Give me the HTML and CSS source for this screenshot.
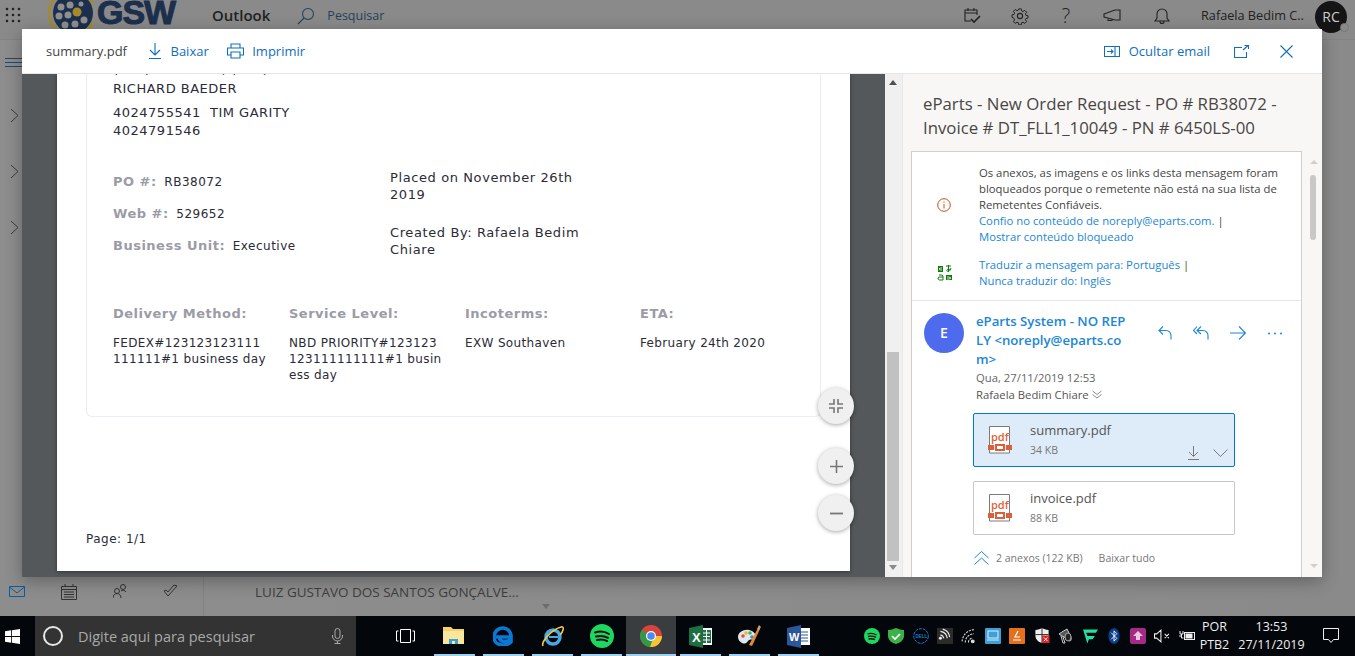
FILE: index.html
```html
<!DOCTYPE html>
<html lang="pt-BR">
<head>
  <meta charset="UTF-8">
  <title>Outlook</title>
  <link rel="stylesheet" href="styles.css">
</head>
<body>
  <div class="app">
    <!-- dimmed outlook behind the viewer -->
    <header class="topbar">
      <svg class="waffle" width="16" height="16" viewBox="0 0 16 16" fill="#222"><circle cx="2" cy="2" r="1.3"/><circle cx="8" cy="2" r="1.3"/><circle cx="14" cy="2" r="1.3"/><circle cx="2" cy="8" r="1.3"/><circle cx="8" cy="8" r="1.3"/><circle cx="14" cy="8" r="1.3"/><circle cx="2" cy="14" r="1.3"/><circle cx="8" cy="14" r="1.3"/><circle cx="14" cy="14" r="1.3"/></svg>
      <div class="logo">
        <svg width="46" height="29" viewBox="0 0 46 29"><circle cx="25" cy="13" r="23" fill="none" stroke="#a58a2c" stroke-width="2.500"/><circle cx="26" cy="13" r="20" fill="#1c2f4c"/><g fill="#8f8f8f"><circle cx="14" cy="7" r="3.500"/><circle cx="23" cy="5" r="3.500"/><circle cx="12" cy="16" r="3.500"/><circle cx="21" cy="15" r="3.500"/><circle cx="37" cy="20" r="3.500"/><circle cx="28" cy="24" r="3.500"/><circle cx="18" cy="25" r="3.500"/><circle cx="34" cy="4" r="2.500"/></g><circle cx="30" cy="12" r="4.500" fill="#a58a2c"/></svg>
        <span class="logo-name">GSW</span>
      </div>
      <span class="app-name">Outlook</span>
      <svg class="search-icon" width="18" height="18" viewBox="0 0 18 18" fill="none" stroke="#24425c" stroke-width="1.1"><circle cx="11" cy="7" r="5.5"/><path d="M7 11l-6 6"/></svg>
      <span class="search-label">Pesquisar</span>
      <div class="top-actions">
        <svg width="18" height="18" viewBox="0 0 18 18" fill="none" stroke="#222" stroke-width="1.1"><path d="M8 14H2V3h12v5M2 6h12M5 1v3M11 1v3"/><path d="M8 12l3 3 6-6" stroke-width="1.6"/></svg>
        <svg class="gear" width="18" height="18" viewBox="0 0 18 18" fill="none" stroke="#222" stroke-width="1.1"><circle cx="9" cy="9" r="2.6"/><path d="M7.6 1h2.8l.4 2.3 1.6.7 2-1.3 2 2-1.3 2 .7 1.6 2.2.4v2.600l-2.200.4-.7 1.600 1.300 2-2 2-2-1.300-1.600.7-.4 2.200H7.600l-.4-2.200-1.600-.7-2 1.300-2-2 1.300-2-.7-1.600L0 10.300V7.700l2.200-.4.7-1.600-1.300-2 2-2 2 1.300 1.600-.7z" transform="translate(1 1) scale(.89)"/></svg>
        <span class="help">?</span>
        <svg width="18" height="16" viewBox="0 0 18 16" fill="none" stroke="#222" stroke-width="1.1"><path d="M1 6l11-4h5v10h-5L1 9zM5 10v2.500h4V11"/></svg>
        <svg width="16" height="18" viewBox="0 0 16 18" fill="none" stroke="#222" stroke-width="1.1"><path d="M1 14h14l-2-3V7a5 5 0 0 0-10 0v4zM6 14.500a2 2 0 0 0 4 0"/></svg>
      </div>
      <span class="user-name">Rafaela Bedim C..</span>
      <div class="user-avatar">RC<span class="presence"></span></div>
    </header>

    <div class="behind">
      <nav class="rail">
        <svg class="burger" width="17" height="9" viewBox="0 0 17 9" stroke="#1e4a70"><path d="M0 .5h17M0 4.500h17M0 8.500h17"/></svg>
        <svg class="rail-chev" width="9" height="15" viewBox="0 0 9 15" fill="none" stroke="#3c3c3c"><path d="M1 1l7 6.500-7 6.500"/></svg>
        <svg class="rail-chev" width="9" height="15" viewBox="0 0 9 15" fill="none" stroke="#3c3c3c"><path d="M1 1l7 6.500-7 6.500"/></svg>
        <svg class="rail-chev" width="9" height="15" viewBox="0 0 9 15" fill="none" stroke="#3c3c3c"><path d="M1 1l7 6.500-7 6.500"/></svg>
      </nav>
      <div class="bottom-nav">
        <div class="nav-icons">
          <svg width="16" height="12" viewBox="0 0 16 12" fill="none" stroke="#0f5c9c"><path d="M.5.500h15v10H.5zM.5 1l7.500 6 7.500-6"/></svg>
          <svg width="16" height="16" viewBox="0 0 16 16" fill="none" stroke="#333"><path d="M.5 2.500h15v13H.5zM.5 5.500h15M3 8h10M3 10.500h10M3 13h10M4 0v2M12 0v2"/></svg>
          <svg width="14" height="15" viewBox="0 0 14 15" fill="none" stroke="#333"><circle cx="10" cy="3" r="2.500"/><circle cx="4" cy="7" r="2.500"/><path d="M0 14c0-6 8-6 8 0M8 7c1-1 4-1 5 1"/></svg>
          <svg width="15" height="13" viewBox="0 0 15 13" fill="none" stroke="#333"><path d="M1 7l4 5 9-10-3-1-6 7-2-2z"/></svg>
        </div>
        <div class="mail-peek">
          <span class="peek-name">LUIZ GUSTAVO DOS SANTOS GONÇALVE...</span>
          <span class="peek-arrow"></span>
        </div>
      </div>
    </div>

    <!-- attachment viewer -->
    <section class="viewer">
      <div class="viewer-head">
        <span class="file-title">summary.pdf</span>
        <button class="tool">
          <svg width="14" height="18" viewBox="0 0 14 18" fill="none" stroke="#106ebe" stroke-width="1.1"><path d="M7 1v12M2 8l5 5 5-5M1 16.500h12"/></svg>
          Baixar
        </button>
        <button class="tool">
          <svg width="17" height="16" viewBox="0 0 17 16" fill="none" stroke="#106ebe" stroke-width="1.1"><path d="M4 5V1h9v4M4 12H.5V5h16v7H13M4 9h9v6H4z"/></svg>
          Imprimir
        </button>
        <div class="head-right">
          <button class="tool">
            <svg width="16" height="11" viewBox="0 0 16 11" fill="none" stroke="#106ebe" stroke-width="1.1"><path d="M.5.500h15v10H.5zM11 .5v10M3 5.500h6M7 3.500l2 2-2 2"/></svg>
            Ocultar email
          </button>
          <svg width="15" height="13" viewBox="0 0 15 13" fill="none" stroke="#106ebe" stroke-width="1.1"><path d="M8 2.500H.5v10h12V7M9 5l5-4.500M10.500.5H14.500V4"/></svg>
          <svg class="close" width="13" height="13" viewBox="0 0 13 13" stroke="#106ebe" stroke-width="1.1"><path d="M.5.500l12 12M12.500.5l-12 12"/></svg>
        </div>
      </div>

      <div class="viewer-body">
        <div class="pdf-pane">
          <div class="pdf-page">
            <div class="pdf-card">
              <p class="clipped">(402) 475-5541, (402) 479</p>
              <p class="pdf-line">RICHARD BAEDER</p>
              <p class="pdf-line contact">4024755541&nbsp; TIM GARITY<br>4024791546</p>

              <div class="order-grid">
                <div class="order-ids">
                  <p><b>PO #:</b> <span>RB38072</span></p>
                  <p><b>Web #:</b> <span>529652</span></p>
                  <p><b>Business Unit:</b> <span>Executive</span></p>
                </div>
                <div class="order-meta">
                  <p>Placed on November 26th 2019</p>
                  <p>Created By: Rafaela Bedim Chiare</p>
                </div>
              </div>

              <div class="ship-grid">
                <div><b>Delivery Method:</b><p>FEDEX#123123123111<br>111111#1 business day</p></div>
                <div><b>Service Level:</b><p>NBD PRIORITY#123123<br>123111111111#1 busin<br>ess day</p></div>
                <div><b>Incoterms:</b><p>EXW Southaven</p></div>
                <div><b>ETA:</b><p>February 24th 2020</p></div>
              </div>
            </div>
            <p class="page-no">Page: 1/1</p>
            <div class="zoom-tools">
              <button class="zoom-btn shrink">
                <svg width="14" height="14" viewBox="0 0 14 14" fill="none" stroke="#777" stroke-width="1.6"><path d="M5 0v5H0M9 0v5h5M5 14V9H0M9 14V9h5"/></svg>
              </button>
              <button class="zoom-btn">
                <svg width="13" height="13" viewBox="0 0 13 13" stroke="#777" stroke-width="1.6"><path d="M6.500 0v13M0 6.500h13"/></svg>
              </button>
              <button class="zoom-btn">
                <svg width="13" height="13" viewBox="0 0 13 13" stroke="#777" stroke-width="1.8"><path d="M0 6.500h13"/></svg>
              </button>
            </div>
          </div>
        </div>
        <div class="pdf-scroll">
          <span class="pdf-up"></span>
          <span class="pdf-thumb"></span>
          <span class="pdf-down"></span>
        </div>

        <aside class="mail-pane">
          <h2 class="subject">eParts - New Order Request - PO # RB38072 - Invoice # DT_FLL1_10049 - PN # 6450LS-00</h2>
          <div class="mail-wrap">
            <div class="mail-card">
              <div class="notice">
                <svg width="14" height="14" viewBox="0 0 14 14" fill="none" stroke="#ca5010"><circle cx="7" cy="7" r="6.300"/><path d="M7 6v4.500M7 3.500v1.200"/></svg>
                <p>Os anexos, as imagens e os links desta mensagem foram bloqueados porque o remetente não está na sua lista de Remetentes Confiáveis.<br><a>Confio no conteúdo de noreply@eparts.com.</a> |<br><a>Mostrar conteúdo bloqueado</a></p>
              </div>
              <div class="notice translate">
                <svg width="16" height="16" viewBox="0 0 16 16" fill="#107c10"><path d="M1 1h5v6H1zM9 10h6v5H9z"/><path d="M5 3H3L2 4l1 1h2M10 12h2l2 1-2 1h-2" stroke="#fff" stroke-width=".8" fill="none"/><path d="M9 1h5M11.500 0v7M14 3c-1 3-3 4-4 3s1-3 4-1" fill="none" stroke="#107c10"/><path d="M2 10h3l1 1v4H2.500L1 14v-1l1-1h4" fill="none" stroke="#107c10"/></svg>
                <p><a>Traduzir a mensagem para: Português</a> |<br><a>Nunca traduzir do: Inglês</a></p>
              </div>
              <div class="mail-from">
                <div class="from-avatar">E</div>
                <div class="from-info">
                  <a class="from-name">eParts System - NO REP<br>LY &lt;noreply@eparts.co<br>m&gt;</a>
                  <p class="from-date">Qua, 27/11/2019 12:53</p>
                  <p class="from-to">Rafaela Bedim Chiare <svg width="10" height="9" viewBox="0 0 10 9" fill="none" stroke="#8a8a8a"><path d="M.5 1L5 4.500 9.500 1M.5 4.500L5 8l4.500-3.500"/></svg></p>
                </div>
                <div class="from-actions">
                  <svg width="14" height="14" viewBox="0 0 14 14" fill="none" stroke="#1a86d8" stroke-width="1.1"><path d="M5 .5L1 4.500l4 4M1 4.500h7a5 5 0 0 1 5 5v4"/></svg>
                  <svg width="16" height="14" viewBox="0 0 16 14" fill="none" stroke="#1a86d8" stroke-width="1.1"><path d="M4 .5L.5 4.500 4 8M8 .5L4 4.500 8 8M4 4.500h6a5 5 0 0 1 5 5v4"/></svg>
                  <svg width="16" height="14" viewBox="0 0 16 14" fill="none" stroke="#1a86d8" stroke-width="1.1"><path d="M0 7h15M9 .5L15.500 7 9 13.500"/></svg>
                  <svg width="16" height="3" viewBox="0 0 16 3" fill="#1a86d8"><circle cx="2" cy="1.500" r="1"/><circle cx="8" cy="1.500" r="1"/><circle cx="14" cy="1.500" r="1"/></svg>
                </div>
              </div>
              <div class="attachments">
                <div class="attach selected">
                  <svg class="pdf-icon" width="24" height="28" viewBox="0 0 24 28"><path d="M1.500 19V.5h20V19M1.500 24v3h20v-3" fill="#fff" stroke="#7a7a7a"/><path d="M0 19h6v5H0zM18 19h6v5h-6zM7 18h10v7H7z" fill="#d9603a"/><path d="M9 20h6v3H9z" fill="#fff"/><text x="3" y="15" class="pdf-glyph">pdf</text></svg>
                  <div class="attach-info"><span class="attach-name">summary.pdf</span><span class="attach-size">34 KB</span></div>
                  <div class="attach-actions">
                    <svg width="11" height="14" viewBox="0 0 11 14" fill="none" stroke="#7a7a7a"><path d="M5.500 0v10M1 6l4.500 4.500L10 6M0 13.500h11"/></svg>
                    <svg class="attach-chev" width="15" height="8" viewBox="0 0 15 8" fill="none" stroke="#7a7a7a"><path d="M.5.500l7 7 7-7"/></svg>
                  </div>
                </div>
                <div class="attach">
                  <svg class="pdf-icon" width="24" height="28" viewBox="0 0 24 28"><path d="M1.500 19V.5h20V19M1.500 24v3h20v-3" fill="#fff" stroke="#7a7a7a"/><path d="M0 19h6v5H0zM18 19h6v5h-6zM7 18h10v7H7z" fill="#d9603a"/><path d="M9 20h6v3H9z" fill="#fff"/><text x="3" y="15" class="pdf-glyph">pdf</text></svg>
                  <div class="attach-info"><span class="attach-name">invoice.pdf</span><span class="attach-size">88 KB</span></div>
                </div>
                <div class="attach-foot">
                  <svg width="15" height="14" viewBox="0 0 15 14" fill="none" stroke="#1a86d8"><path d="M.5 7L7.500.5 14.500 7M.5 13.500L7.500 7l7 6.500"/></svg>
                  <span>2 anexos (122 KB)</span>
                  <span class="baixar">Baixar tudo</span>
                </div>
              </div>
            </div>
            <div class="mail-scroll"><span class="arrow-up"></span><span class="mail-thumb"></span><span class="arrow-down"></span></div>
          </div>
        </aside>
      </div>
    </section>
  </div>

  <footer class="taskbar">
    <div class="start">
      <svg width="15" height="15" viewBox="0 0 15 15" fill="#fff"><path d="M0 2.200L6.200 1.300V7H0zM7 1.200L15 0v7H7zM0 7.900h6.200v5.800L0 12.800zM7 7.900h8V15l-8-1.200z"/></svg>
    </div>
    <div class="task-search">
      <span class="cortana"></span>
      <span class="task-search-text">Digite aqui para pesquisar</span>
      <svg width="11" height="16" viewBox="0 0 11 16" fill="none" stroke="#aaa"><rect x="3" y=".5" width="5" height="10" rx="2.500"/><path d="M.5 7v1a5 5 0 0 0 10 0V7M5.500 13v2.500M2.500 15.500h6"/></svg>
    </div>
    <div class="task-apps">
      <div class="task-app">
        <svg width="19" height="14" viewBox="0 0 19 14" fill="none" stroke="#fff"><path d="M4.500.5h10v13h-10zM2.500 2H.5v10h2M16.500 2h2v10h-2"/></svg>
      </div>
      <div class="task-app running">
        <svg width="22" height="20" viewBox="0 0 22 20"><path d="M0 1h8l2 2h11v15H0z" fill="#f3d26b"/><path d="M0 5h21v13H0z" fill="#fbe79c"/><path d="M6 13h9v5h-3v-3H9v3H6z" fill="#3aa0da"/></svg>
      </div>
      <div class="task-app running">
        <svg width="20" height="20" viewBox="0 0 20 20" fill="none"><path d="M3 11h15C18 5 14 2 10 2 5 2 1 6 1 11c0 5 4 8 9 8 3 0 6-1 8-3v-3c-3 3-11 4-12-2" stroke="#0a78d4" stroke-width="3.600"/></svg>
      </div>
      <div class="task-app running">
        <svg width="24" height="24" viewBox="0 0 24 24" fill="none"><circle cx="12" cy="13" r="7" stroke="#49a7e3" stroke-width="3.500"/><path d="M8 13h9" stroke="#49a7e3" stroke-width="2"/><path d="M2 22C0 18 10 6 20 3c4-1 2 5-1 8" stroke="#f2c744" stroke-width="1.600"/></svg>
      </div>
      <div class="task-app running">
        <svg width="24" height="24" viewBox="0 0 24 24" fill="none"><circle cx="12" cy="12" r="12" fill="#1ed760"/><path d="M5 8.500c5-1.500 10-1 14 1.500M6 12.500c4-1 8.500-.7 12 1.300M7 16c3.500-.8 7-.5 10 1" stroke="#111" stroke-width="2" stroke-linecap="round"/></svg>
      </div>
      <div class="task-app running active">
        <svg width="22" height="22" viewBox="0 0 22 22"><circle cx="11" cy="11" r="11" fill="#d9443a"/><path d="M11 11L1.500 16.500A11 11 0 0 1 2 5z" fill="#2e9b46"/><path d="M11 11h11a11 11 0 0 1-12 11z" fill="#f6c533"/><path d="M1.500 16.500A11 11 0 0 0 10 22l4-11z" fill="#2e9b46"/><circle cx="11" cy="11" r="5" fill="#fff"/><circle cx="11" cy="11" r="3.800" fill="#4a8af4"/></svg>
      </div>
      <div class="task-app running">
        <svg width="23" height="23" viewBox="0 0 23 23"><path d="M8 3h15v17H8z" fill="#fff"/><path d="M13 5h9v13h-9z" fill="#1f7246"/><path d="M14 8h7M14 11.500h7M14 15h7M17.500 5v13" stroke="#fff"/><path d="M0 3l14-3v23L0 20z" fill="#1e6e42"/><text x="3" y="16.500" class="office-glyph">X</text></svg>
      </div>
      <div class="task-app running">
        <svg width="24" height="24" viewBox="0 0 24 24"><path d="M1 13C1 8 7 5 12 6c5 1 8 5 6 8s-5 0-7 3-4 3-6 2-4-3-4-6z" fill="#dfe7ec"/><circle cx="6" cy="12" r="1.800" fill="#e0503c"/><circle cx="9" cy="9" r="1.800" fill="#f0b429"/><circle cx="13" cy="9" r="1.800" fill="#4caf50"/><circle cx="15" cy="13" r="1.800" fill="#3f88d5"/><path d="M12 21L21 4l2 1-8 17z" fill="#e58a2e"/><path d="M20 5l2-4 2 2-2 3z" fill="#caa27a"/></svg>
      </div>
      <div class="task-app running">
        <svg width="23" height="23" viewBox="0 0 23 23"><path d="M8 3h15v17H8z" fill="#fff"/><path d="M13 7h8M13 10h8M13 13h8M13 16h8" stroke="#2b579a"/><path d="M0 3l14-3v23L0 20z" fill="#2b579a"/><text x="2" y="16" class="office-glyph small">W</text></svg>
      </div>
    </div>
    <div class="tray">
      <svg viewBox="0 0 16 16"><circle cx="8" cy="8" r="8" fill="#1ed760"/><path d="M3.500 6c3-1 6-.7 9 1M4 8.500c3-.7 5.500-.4 8 .8M4.500 11c2.300-.5 4.500-.3 6.500.7" stroke="#111" stroke-width="1.300" fill="none"/></svg>
      <svg viewBox="0 0 16 16"><path d="M0 2c3 0 5-1 8-2 3 1 5 2 8 2v6c0 4-4 7-8 8-4-1-8-4-8-8z" fill="#3cb14a"/><path d="M4 8l3 3 5-5" stroke="#fff" stroke-width="1.700" fill="none"/></svg>
      <svg viewBox="0 0 16 16" fill="none"><circle cx="8" cy="8" r="7.300" stroke="#1a7fd4" stroke-dasharray="3 1"/><text x="2.600" y="10" class="dell-glyph">DELL</text></svg>
      <svg viewBox="0 0 14 14" fill="none"><rect width="14" height="14" fill="#2b2b2b"/><path d="M3 6a4 4 0 0 1 3 3M3 3a7 7 0 0 1 6 6M5 1a8 8 0 0 1 6 7" stroke="#eee"/><circle cx="3" cy="9" r="1.300" fill="#eee"/></svg>
      <svg viewBox="0 0 15 14" fill="none" stroke="#ddd"><path d="M1 12a12 12 0 0 1 11-11M4 13a8 8 0 0 1 8-8M7 13a4 4 0 0 1 4-4" stroke-dasharray="2 1"/><circle cx="11" cy="12" r="1.300" fill="#ddd"/></svg>
      <svg viewBox="0 0 16 16"><rect width="16" height="16" rx="1" fill="#3f9fd6"/><rect x="3" y="3" width="10" height="7" fill="none" stroke="#d8f0fb"/><path d="M2 12h12" stroke="#d8f0fb"/></svg>
      <svg viewBox="0 0 16 16"><rect width="16" height="16" rx="1" fill="#e5711d"/><path d="M9 3L6 9h5M4 12h8" stroke="#fff" stroke-width="1.200" fill="none"/></svg>
      <svg viewBox="0 0 16 17"><path d="M1 2c3 0 5-1 7-2 2 1 4 2 7 2v6c0 4-3 7-7 8-4-1-7-4-7-8z" fill="#eee"/><path d="M8 0v16M1 7h14" stroke="#222"/><rect x="8" y="8" width="8" height="8" fill="#d8242a"/><path d="M10 10l4 4M14 10l-4 4" stroke="#fff"/></svg>
      <svg viewBox="0 0 16 16" fill="none"><path d="M1 6l3-2 5-3 3 6c2 3 1 6 0 6s-3-2-6-4L4 8z" fill="#555" stroke="#ccc"/><ellipse cx="10" cy="9" rx="3" ry="4" fill="#222" stroke="#aaa"/><path d="M3 8l2 7h2l-2-6" stroke="#ccc"/></svg>
      <svg viewBox="0 0 15 14" fill="#1fe3a2"><path d="M1 1h14l-2 3H4l1 3h7l-2 3H6.500L5 14z"/></svg>
      <svg viewBox="0 0 12 17"><ellipse cx="6" cy="8.500" rx="6" ry="8.500" fill="#0b3c86"/><path d="M3 5l6 6-3 3V3l3 3-6 6" stroke="#fff" fill="none"/></svg>
      <svg viewBox="0 0 16 16"><rect width="16" height="16" rx="2" fill="#a52a86"/><path d="M8 3l5 5h-3v4H6V8H3z" fill="#e9c7e0"/></svg>
      <svg viewBox="0 0 15 13" fill="none" stroke="#eee"><path d="M.5 4.500h2L6.500 1v11l-4-3.500h-2zM10 4.500l4 4M14 4.500l-4 4"/></svg>
      <svg viewBox="0 0 16 12" fill="none" stroke="#eee"><rect x="5.500" y="2.500" width="10" height="7"/><rect x="7" y="4" width="6" height="4" fill="#eee"/><path d="M0 6h3M1 1v3h3V1M2.500 4v4h2"/></svg>
    </div>
    <div class="lang"><span>POR</span><span>PTB2</span></div>
    <div class="clock"><span>13:53</span><span>27/11/2019</span></div>
    <div class="notify">
      <svg width="16" height="16" viewBox="0 0 16 16" fill="none" stroke="#eee"><path d="M.5.500h15v11h-5l-2.500 3-2.500-3h-5z"/></svg>
    </div>
  </footer>
</body>
</html>
```

FILE: styles.css
```css
* {
  box-sizing: border-box;
}
html, body {
  margin: 0;
  height: 656px;
  overflow: hidden;
}
body {
  font-family: "Open Sans", Arial, sans-serif;
  display: flex;
  flex-direction: column;
  background-color: #8c8c8c;
}
p {
  margin: 0;
}
button {
  font: inherit;
  background: none;
  border: 0;
  padding: 0;
}

/* Dimmed page behind the viewer */
.app {
  position: relative;
  height: 616px;
  display: flex;
  flex-direction: column;
  overflow: hidden;
  background: linear-gradient(90deg, #8d8d8d, #8a8a8a);
}
.topbar {
  height: 39px;
  display: flex;
  align-items: flex-start;
  padding-top: 7px;
  background-color: #8a8a8a;
  color: #222;
}
.waffle {
  margin: 0 0 0 5px;
}
.logo {
  width: 165px;
  height: 29px;
  margin: -7px 0 0 26px;
  display: flex;
  flex: none;
}
.logo svg {
  flex: none;
}
.logo-name {
  font-family: "Liberation Sans", Arial, sans-serif;
  font-weight: 700;
  font-size: 34px;
  line-height: 34px;
  height: 34px;
  letter-spacing: -1px;
  color: #1c2f4c;
  margin: -5px 0 0 4px;
  -webkit-text-stroke: 1px #1c2f4c;
}
.app-name {
  font-size: 15px;
  font-weight: 600;
  line-height: 16px;
}
.search-icon {
  margin: 0 0 0 27px;
}
.search-label {
  margin-left: 12px;
  font-size: 12.5px;
  line-height: 17px;
  color: #24425c;
}
.top-actions {
  margin-left: auto;
  width: 207px;
  display: flex;
  justify-content: space-between;
  align-items: center;
  height: 18px;
}
.gear {
  margin-left: -3px;
}
.help {
  font-size: 20px;
  line-height: 18px;
  font-weight: 300;
}
.user-name {
  margin-left: 31px;
  font-size: 12.7px;
  line-height: 17px;
  width: 114px;
  white-space: nowrap;
}
.user-avatar {
  position: relative;
  width: 32px;
  height: 32px;
  margin: -6px 8px 0 0;
  border-radius: 50%;
  background-color: #151515;
  color: #ccc;
  font-size: 14px;
  line-height: 32px;
  text-align: center;
  flex: none;
}
.presence {
  position: absolute;
  right: -2px;
  bottom: 1px;
  width: 9px;
  height: 9px;
  border: 1px solid #777;
  border-radius: 50%;
  background-color: #8a8a8a;
}
.behind {
  flex: 1;
  display: flex;
  flex-direction: column;
  position: relative;
  border-top: 1px solid #838383;
}
.rail {
  flex: 1;
  display: flex;
  flex-direction: column;
  align-items: flex-start;
  padding: 18px 0 0 5px;
}
.burger {
  margin-bottom: 41px;
}
.rail-chev {
  margin: 0 0 41px 5px;
}
.bottom-nav {
  height: 40px;
  display: flex;
}
.nav-icons {
  width: 189px;
  padding: 8px 0 0 9px;
  display: flex;
  gap: 36px;
  align-items: flex-start;
}
.nav-icons svg:first-child {
  margin-top: 2px;
}
.mail-peek {
  position: relative;
  width: 352px;
  margin-left: 14px;
  border-left: 1px solid #828282;
  padding: 2px 0 0 51px;
  font-size: 13.5px;
  color: #3e3e3e;
  line-height: 28px;
  white-space: nowrap;
}
.peek-arrow {
  position: absolute;
  right: 5px;
  top: 28px;
  border: 4px solid transparent;
  border-top: 5px solid #6d6d6d;
}

/* Viewer */
.viewer {
  position: absolute;
  left: 22px;
  top: 29px;
  width: 1300px;
  height: 548px;
  display: flex;
  flex-direction: column;
  background-color: #fff;
  box-shadow: 0 4px 16px rgba(0, 0, 0, 0.3);
}
.viewer-head {
  height: 44px;
  flex: none;
  display: flex;
  align-items: center;
  gap: 18px;
  padding: 0 29px 0 24px;
  font-size: 13px;
  background-color: #fff;
  position: relative;
  z-index: 2;
  box-shadow: 0 1px 0 #e6e6e6;
}
.file-title {
  color: #444;
  margin-right: 3px;
}
.tool {
  display: flex;
  align-items: center;
  gap: 8.5px;
  color: #106ebe;
  font-size: 13px;
}
.head-right {
  margin-left: auto;
  display: flex;
  align-items: center;
  gap: 24px;
}
.close {
  margin-left: 7px;
}
.viewer-body {
  flex: 1;
  display: flex;
  min-height: 0;
}
.pdf-pane {
  width: 863px;
  flex: none;
  padding-left: 35px;
  background-color: #54585a;
}
.pdf-page {
  position: relative;
  width: 793px;
  height: 498px;
  padding: 0 29px 0 29px;
  background-color: #fff;
  box-shadow: 0 1px 4px rgba(0, 0, 0, 0.4);
  font-family: "DejaVu Sans", sans-serif;
  color: #2b2b38;
}
.pdf-card {
  height: 344px;
  padding: 0 0 0 26px;
  border: 1px solid #ececf2;
  border-top: 0;
  border-radius: 0 0 6px 6px;
  overflow: hidden;
  font-size: 13px;
  letter-spacing: .5px;
  line-height: 18px;
}
.clipped {
  margin-top: -12px;
  height: 19px;
  white-space: nowrap;
}
.contact {
  margin-top: 6px;
}
.order-grid {
  display: flex;
  margin-top: 29px;
}
.order-ids {
  width: 277px;
  padding-top: 4px;
}
.order-ids p {
  height: 32px;
}
.order-ids b,
.ship-grid b {
  color: #9b9ba6;
  font-weight: 700;
}
.order-ids span {
  font-size: 12px;
  margin-left: 3px;
}
.order-meta {
  width: 205px;
  line-height: 17px;
  letter-spacing: .6px;
}
.order-meta p {
  margin-bottom: 21px;
}
.ship-grid {
  display: grid;
  grid-template-columns: 176px 176px 175px 150px;
  margin-top: 27px;
  line-height: 16px;
}
.ship-grid p {
  margin-top: 13px;
  font-size: 12px;
  letter-spacing: .35px;
  white-space: nowrap;
}
.page-no {
  margin: 115px 0 0;
  font-size: 12px;
  letter-spacing: .5px;
}
.zoom-tools {
  position: absolute;
  right: -4px;
  top: 315px;
  display: flex;
  flex-direction: column;
  gap: 11px;
  align-items: center;
}
.zoom-btn {
  width: 36px;
  height: 36px;
  border-radius: 50%;
  display: flex;
  align-items: center;
  justify-content: center;
  background-color: #f0f0f0;
  box-shadow: 0 1px 4px rgba(0, 0, 0, 0.35);
}
.shrink {
  margin-bottom: 13px;
}
.pdf-scroll {
  position: relative;
  width: 18px;
  flex: none;
  padding: 279px 3px 0 2px;
  background-color: #f0f0f0;
  border-right: 1px solid #e8e8e8;
}
.pdf-thumb {
  display: block;
  height: 209px;
  background-color: #c1c1c1;
}
.pdf-up,
.pdf-down {
  position: absolute;
  left: 4px;
  border: 4px solid transparent;
}
.pdf-up {
  top: 3px;
  border-bottom: 5px solid #505050;
}
.pdf-down {
  bottom: 3px;
  border-top: 5px solid #8a8a8a;
}

/* Mail pane */
.mail-pane {
  flex: 1;
  min-width: 0;
  display: flex;
  flex-direction: column;
  padding-left: 8px;
  background-color: #f8f7f6;
}
.subject {
  margin: 0;
  padding: 19px 20px 0 12px;
  height: 78px;
  font-size: 16.8px;
  font-weight: 400;
  line-height: 24px;
  color: #484644;
}
.mail-wrap {
  flex: 1;
  display: flex;
  min-height: 0;
}
.mail-card {
  width: 391px;
  flex: none;
  background-color: #fff;
  border: 1px solid #d2d0ce;
  border-bottom: 0;
  font-size: 11.3px;
  line-height: 16px;
  color: #444;
}
.notice {
  display: flex;
  align-items: center;
  padding: 13px 0 0 25px;
  gap: 28px;
}
.notice p {
  width: 310px;
}
.notice a,
.from-name {
  color: #1a86d8;
}
.translate {
  gap: 26px;
  padding: 12px 0 11px 25px;
  border-bottom: 1px solid #e6e6e6;
}
.mail-from {
  display: flex;
  padding: 11px 0 0 12px;
}
.from-avatar {
  width: 40px;
  height: 40px;
  margin-top: 1px;
  flex: none;
  border-radius: 50%;
  background-color: #4f6bed;
  color: #fff;
  font-size: 14px;
  font-weight: 600;
  line-height: 40px;
  text-align: center;
}
.from-info {
  width: 158px;
  margin-left: 12px;
}
.from-name {
  display: block;
  font-size: 13.2px;
  font-weight: 600;
  line-height: 19px;
  white-space: nowrap;
}
.from-date {
  color: #666;
  line-height: 17px;
}
.from-to {
  color: #555;
  line-height: 17px;
}
.from-actions {
  display: flex;
  align-items: center;
  height: 14px;
  margin: 14px 0 0 24px;
  gap: 21px;
}
.attachments {
  padding: 10px 0 0 61px;
}
.attach {
  position: relative;
  width: 262px;
  height: 54px;
  display: flex;
  align-items: center;
  margin-bottom: 14px;
  padding-left: 14px;
  background-color: #fff;
  border: 1px solid #c8c6c4;
  border-radius: 2px;
}
.selected {
  background-color: #deecf9;
  border-color: #0078d4;
}
.pdf-icon {
  flex: none;
}
.pdf-glyph {
  font-family: "Open Sans", sans-serif;
  font-size: 11px;
  font-weight: 600;
  fill: #e0603a;
}
.attach-info {
  display: flex;
  flex-direction: column;
  margin-left: 18px;
  padding-bottom: 2px;
}
.attach-name {
  font-size: 13px;
  line-height: 19px;
  color: #555;
}
.attach-size {
  margin-top: 3px;
  font-size: 10.5px;
  line-height: 15px;
  color: #777;
}
.attach-actions {
  position: absolute;
  right: 6px;
  bottom: 6px;
  display: flex;
  align-items: flex-end;
  gap: 14px;
}
.attach-chev {
  margin-bottom: 3px;
}
.attach-foot {
  display: flex;
  align-items: center;
  gap: 7px;
  margin: 15px 0 0 1px;
  font-size: 10.5px;
  color: #777;
}
.baixar {
  margin-left: 9px;
}
.mail-scroll {
  flex: 1;
  position: relative;
}
.arrow-up,
.arrow-down {
  position: absolute;
  left: 8px;
  border: 4px solid transparent;
}
.arrow-up {
  top: 5px;
  border-bottom: 4px solid #d0d0d0;
}
.arrow-down {
  bottom: 5px;
  border-top: 4px solid #d0d0d0;
}
.mail-thumb {
  position: absolute;
  left: 8px;
  top: 24px;
  width: 6px;
  height: 65px;
  border-radius: 3px;
  background-color: #c8c8c8;
}

/* Windows taskbar */
.taskbar {
  height: 40px;
  flex: none;
  display: flex;
  align-items: stretch;
  background-color: #03060a;
  color: #eee;
}
.start {
  width: 35px;
  padding-left: 5px;
  display: flex;
  align-items: center;
  flex: none;
}
.task-search {
  width: 321px;
  flex: none;
  display: flex;
  align-items: center;
  padding-left: 8px;
  background-color: #333;
  color: #a9a9a9;
  font-size: 14.5px;
}
.cortana {
  width: 20px;
  height: 20px;
  border: 2.5px solid #e8e8e8;
  border-radius: 50%;
  flex: none;
}
.task-search-text {
  margin-left: 15px;
  width: 254px;
}
.task-apps {
  display: flex;
  margin-left: 24.5px;
  flex: none;
}
.task-app {
  position: relative;
  width: 49.2px;
  display: flex;
  align-items: center;
  justify-content: center;
}
.running::after {
  content: "";
  position: absolute;
  left: 4px;
  right: 4px;
  bottom: 0;
  height: 2px;
  background-color: #9bd0f0;
}
.active {
  background-color: #3a3d40;
}
.active::after {
  left: 0;
  right: 0;
}
.office-glyph {
  font-family: "Liberation Sans", sans-serif;
  font-size: 13px;
  font-weight: 700;
  fill: #fff;
}
.office-glyph.small {
  font-size: 11px;
}
.dell-glyph {
  font-family: "Liberation Sans", sans-serif;
  font-size: 4.5px;
  font-weight: 700;
  fill: #1a7fd4;
}
.tray {
  display: flex;
  align-items: center;
  gap: 8.2px;
  margin-left: 41px;
  flex: none;
}
.tray svg {
  width: 16px;
  height: 16px;
}
.lang,
.clock {
  display: flex;
  flex-direction: column;
  justify-content: center;
  align-items: center;
  font-size: 12.5px;
  line-height: 18px;
  flex: none;
}
.lang {
  margin-left: 5px;
}
.clock {
  margin-left: 9px;
}
.notify {
  margin-left: 18px;
  display: flex;
  align-items: center;
}
```
